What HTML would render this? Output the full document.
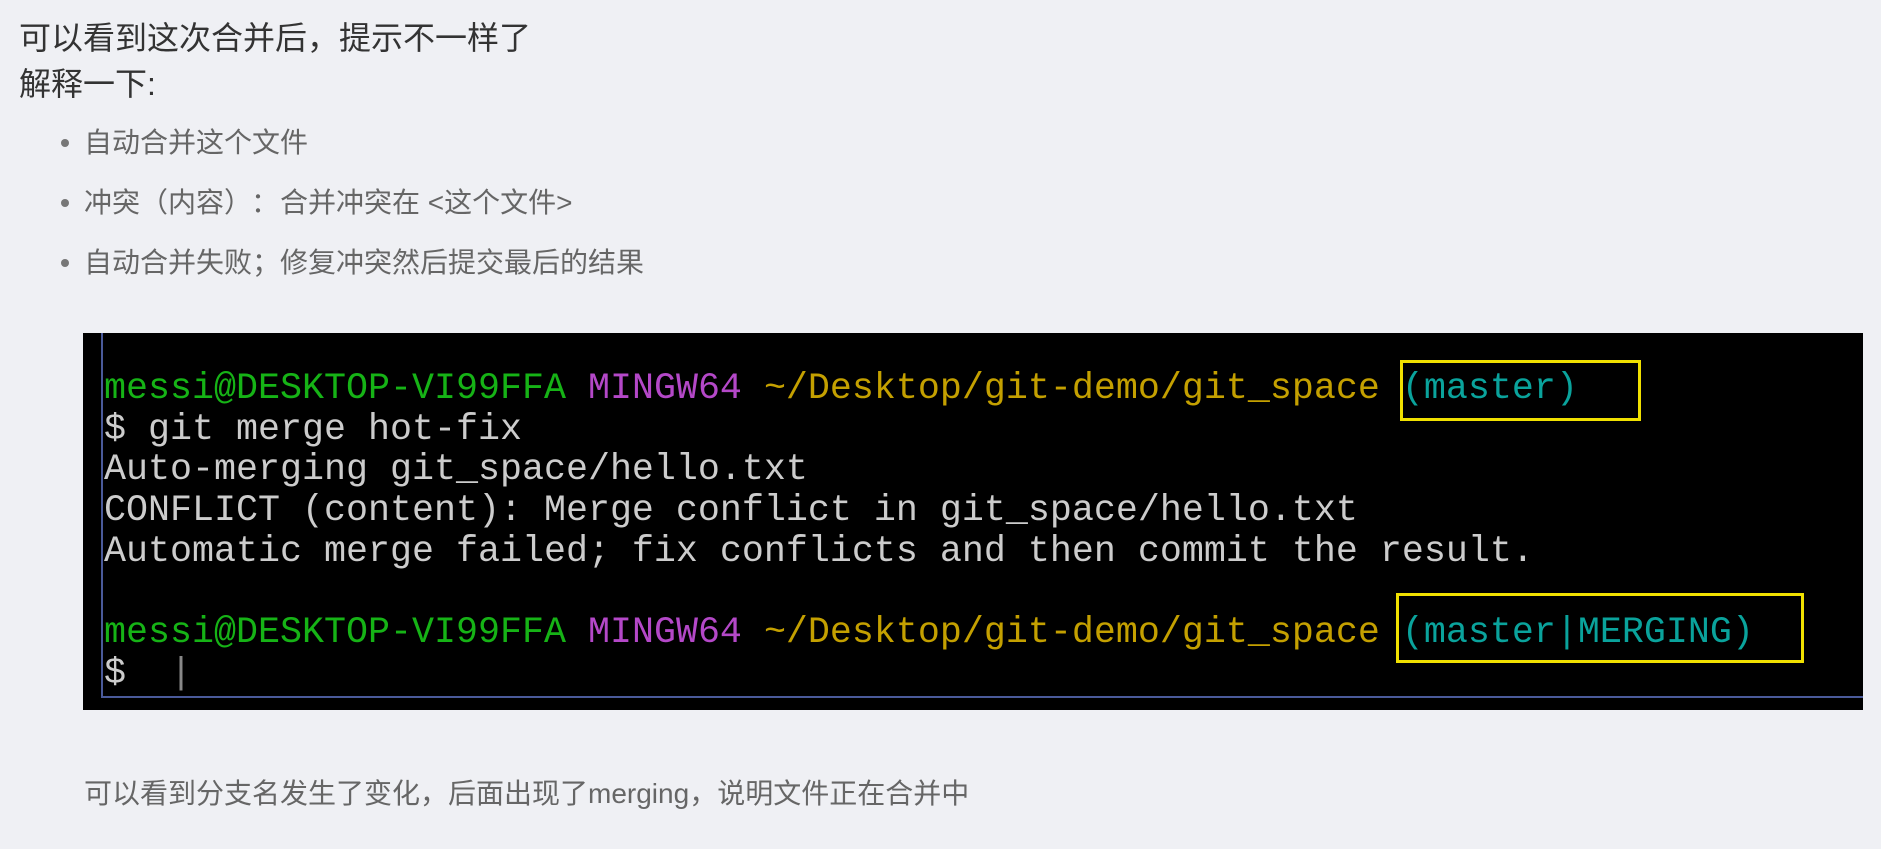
<!DOCTYPE html>
<html><head><meta charset="utf-8"><style>
html,body{margin:0;padding:0;background:#eff0f4;width:1881px;height:849px;overflow:hidden;position:relative}
.t{position:absolute;white-space:nowrap;font-family:"Liberation Sans","Noto Sans CJK SC",sans-serif;font-feature-settings:normal}
.h{left:19px;font-size:32px;color:#333;line-height:40px}
.b{left:84px;font-size:28px;color:#666;line-height:36px}
.dot{position:absolute;left:61px;width:8px;height:8px;border-radius:50%;background:#777}
.term{position:absolute;left:83px;top:333px;width:1780px;height:377px;background:#000}
.vl{position:absolute;left:18px;top:0;width:2px;height:365px;background:#4a5a9a}
.hl{position:absolute;left:18px;top:363px;width:1762px;height:2px;background:#4a5a9a}
pre{position:absolute;left:21px;top:36px;margin:0;font-family:"Liberation Mono",monospace;font-size:36.67px;line-height:40.7px;color:#cccccc}
.g{color:#16b316}.m{color:#b448c8}.y{color:#c4a000}.c{color:#0aa39c}
.box{position:absolute;border:3px solid #f0e000;box-sizing:border-box}
</style></head><body>
<div class="t h" style="top:18px">可以看到这次合并后，提示不一样了</div>
<div class="t h" style="top:64px">解释一下:</div>
<div class="dot" style="top:139px"></div><div class="t b" style="top:125px">自动合并这个文件</div>
<div class="dot" style="top:199px"></div><div class="t b" style="top:185px">冲突<span style="display:inline-block;width:28px;text-align:right">（</span>内容<span style="display:inline-block;width:26px">）</span><span style="display:inline-block;width:30px;text-align:center">：</span>合并冲突在 &lt;这个文件&gt;</div>
<div class="dot" style="top:259px"></div><div class="t b" style="top:245px">自动合并失败<span style="display:inline-block;width:28px">；</span>修复冲突然后提交最后的结果</div>
<div class="term">
<div class="vl"></div><div class="hl"></div>
<pre><span class="g">messi@DESKTOP-VI99FFA</span> <span class="m">MINGW64</span> <span class="y">~/Desktop/git-demo/git_space</span> <span class="c">(master)</span>
$ git merge hot-fix
Auto-merging git_space/hello.txt
CONFLICT (content): Merge conflict in git_space/hello.txt
Automatic merge failed; fix conflicts and then commit the result.

<span class="g">messi@DESKTOP-VI99FFA</span> <span class="m">MINGW64</span> <span class="y">~/Desktop/git-demo/git_space</span> <span class="c">(master|MERGING)</span>
$  <span style="color:#888">|</span></pre>
</div>
<div class="box" style="left:1400px;top:360px;width:241px;height:61px"></div>
<div class="box" style="left:1396px;top:593px;width:408px;height:70px"></div>
<div class="t b" style="top:776px">可以看到分支名发生了变化<span style="display:inline-block;width:28px">，</span>后面出现了merging<span style="display:inline-block;width:28px">，</span>说明文件正在合并中</div>
</body></html>
